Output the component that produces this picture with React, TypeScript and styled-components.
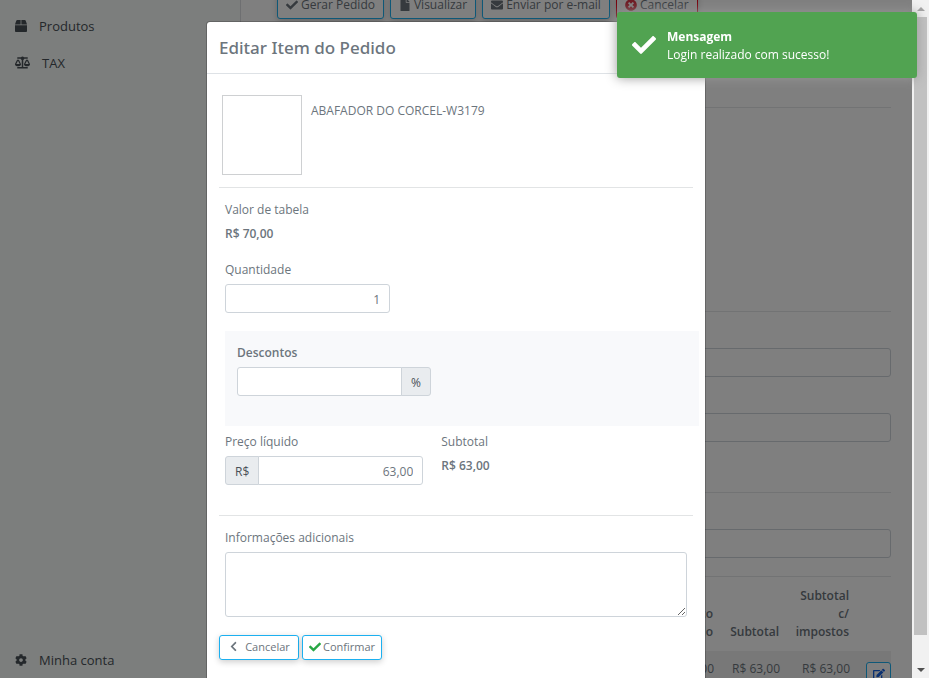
import React from "react";
import styled, { createGlobalStyle, css } from "styled-components";
import {
  FaBalanceScale,
  FaBox,
  FaCheck,
  FaChevronLeft,
  FaCog,
  FaEdit,
  FaEnvelope,
  FaFile,
  FaTimesCircle,
} from "react-icons/fa";

const GlobalStyle = createGlobalStyle`
  *, *::before, *::after { box-sizing: border-box; }
  body {
    margin: 0;
    font-family: "Open Sans", "Noto Sans", sans-serif;
    font-size: 12px;
    line-height: 18px;
    color: #6c757d;
    background: #fff;
  }
  button, input, textarea { font: inherit; color: inherit; margin: 0; }
`;

const Screen = styled.div`
  display: flex;
  height: 100vh;
  overflow: hidden;
`;

const Viewport = styled.div`
  position: relative;
  display: flex;
  flex: 1;
  min-width: 0;
  overflow: hidden;
`;

/* Sidebar */

const Sidebar = styled.nav`
  display: flex;
  flex-direction: column;
  justify-content: space-between;
  flex: 0 0 241px;
  padding: 7px 15px 0;
  background: #f8fcfa;
  border-right: 1px solid #dcdfe2;
`;

const SideGroup = styled.div`
  display: flex;
  flex-direction: column;
`;

const SideLink = styled.a`
  display: flex;
  align-items: center;
  gap: 12px;
  height: 37px;
  font-size: 13px;
  font-weight: 500;
  color: #495057;
  text-decoration: none;

  svg { font-size: 12px; }
`;

const WideSideLink = styled(SideLink)`
  svg { font-size: 15px; }
`;

/* Order page */

const Main = styled.main`
  flex: 1;
  min-width: 0;
  margin-top: -8px;
  padding: 0 21px;
`;

const Toolbar = styled.div`
  display: flex;
  gap: 6px;
  padding-left: 15px;
  margin-bottom: 88px;
`;

const buttonBase = css`
  display: inline-flex;
  align-items: center;
  justify-content: center;
  background: #fff;
  border: 1px solid #1cb0f0;
  border-radius: 3px;
  cursor: pointer;
  white-space: nowrap;
`;

const ToolButton = styled.button<{ $danger?: boolean }>`
  ${buttonBase}
  gap: 3px;
  height: 27px;
  padding: 0 8px 2px;
  font-weight: 500;
  border-color: ${(p) => (p.$danger ? "#f00018" : "#1cb0f0")};
  box-shadow: 0 2px 6px rgba(0, 0, 0, 0.2);

  svg { color: ${(p) => (p.$danger ? "#dc3545" : "inherit")}; }
`;

const Section = styled.section<{ $height: number }>`
  display: flex;
  flex-direction: column;
  gap: 36px;
  height: ${(p) => p.$height}px;
  padding-top: 36px;
  border-top: 1px solid #e4e6e8;
`;

const inputBase = css`
  height: 29px;
  padding: 2px 9px 0;
  background: #fff;
  border: 1px solid #ced4da;
  border-radius: 3px;
  outline: none;
`;

const PageInput = styled.input`
  ${inputBase}
  width: 100%;
`;

const ItemsTable = styled.table`
  width: 100%;
  border-collapse: collapse;
  border-top: 1px solid #e4e6e8;
  text-align: right;

  th {
    height: 74px;
    padding: 0 12px 10px 0;
    vertical-align: bottom;
    font-weight: 600;
  }
  td {
    height: 42px;
    padding: 9px 11px 0 0;
    vertical-align: top;
    white-space: nowrap;
  }
  tbody tr { background: #f0f0f0; }
  td:last-child { padding: 11px 0 0; }
`;

const EditButton = styled.button`
  ${buttonBase}
  width: 25px;
  height: 25px;
  padding: 0;
  color: #1460e0;
`;

/* Modal */

const Backdrop = styled.div`
  position: absolute;
  inset: 0;
  display: flex;
  justify-content: center;
  align-items: flex-start;
  padding-top: 21px;
  background: rgba(0, 0, 0, 0.5);
  overflow: hidden;
`;

const Modal = styled.div`
  flex: 0 1 500px;
  min-height: 700px;
  background: #fff;
  background-clip: padding-box;
  border: 1px solid rgba(0, 0, 0, 0.2);
  border-radius: 4px;
`;

const ModalHeader = styled.header`
  padding: 13px 12px;
  border-bottom: 1px solid #dee2e6;
`;

const ModalTitle = styled.h1`
  margin: 0;
  font-family: "Noto Sans", "Open Sans", sans-serif;
  font-size: 17px;
  line-height: 25px;
  font-weight: 500;
`;

const ModalBody = styled.form`
  padding: 21px 12px;
`;

const Product = styled.div`
  display: flex;
  gap: 9px;
  padding: 0 3px 12px;
`;

const Thumb = styled.div`
  width: 80px;
  height: 80px;
  border: 1px solid #ced0d2;
`;

const ProductName = styled.div`
  padding-top: 7px;
`;

const Rule = styled.hr`
  height: 1px;
  margin: 0;
  border: 0;
  background: #e2e4e5;
`;

const Fields = styled.div`
  display: flex;
  flex-direction: column;
  gap: 18px;
  padding: 13px 6px 0;
`;

const Field = styled.div<{ $gap?: number }>`
  display: flex;
  flex-direction: column;
  align-items: flex-start;
  gap: ${(p) => p.$gap ?? 5}px;
`;

const Strong = styled.strong`
  font-weight: 600;
`;

const TextInput = styled.input`
  ${inputBase}
  width: 165px;
  text-align: right;
`;

const DiscountPanel = styled.div`
  margin-right: -12px;
  padding: 13px 12px 30px;
  background: #f8f9fb;

  label { font-weight: 600; }
`;

const InputGroup = styled.div`
  display: flex;

  > :not(:first-child) {
    margin-left: -1px;
    border-top-left-radius: 0;
    border-bottom-left-radius: 0;
  }
  > :not(:last-child) {
    border-top-right-radius: 0;
    border-bottom-right-radius: 0;
  }
`;

const Addon = styled.span`
  ${inputBase}
  line-height: 26px;
  color: #495057;
  background: #e9ecef;
`;

const PriceRow = styled.div`
  display: flex;
  gap: 18px;
  padding: 7px 6px 30px;
`;

const Notes = styled.textarea`
  ${inputBase}
  display: block;
  width: 100%;
  height: 65px;
  resize: both;
`;

const Actions = styled.div`
  display: flex;
  gap: 3px;
  padding-top: 18px;
`;

const ActionButton = styled.button<{ $gap: number }>`
  ${buttonBase}
  gap: ${(p) => p.$gap}px;
  width: 80px;
  height: 25px;
  padding: 0 0 2px;
  font-size: 11px;
  box-shadow: 0 2px 6px rgba(0, 0, 0, 0.2);
`;

const GreenCheck = styled(FaCheck)`
  font-size: 12px;
  color: #28a745;
`;

/* Toast */

const Toast = styled.div`
  position: fixed;
  top: 12px;
  right: 12px;
  display: flex;
  align-items: center;
  gap: 11px;
  width: 300px;
  height: 66px;
  padding: 0 15px;
  color: #fff;
  background: #51a351;
  border-radius: 3px;
  box-shadow: 0 0 12px #999;

  svg { font-size: 24px; }
`;

const ToastText = styled.div`
  display: flex;
  flex-direction: column;
  padding-top: 2px;

  strong { font-weight: 700; }
`;

/* Scrollbar */

const Scrollbar = styled.div`
  display: flex;
  flex-direction: column;
  flex: 0 0 17px;
  padding: 0 2px;
  background: #f1f1f1;
`;

const ScrollArrow = styled.div<{ $down?: boolean }>`
  display: flex;
  align-items: center;
  justify-content: center;
  height: 17px;

  &::before {
    content: "";
    border: 4px solid transparent;
    ${(p) =>
      p.$down
        ? "border-top-color: #505050; border-bottom-width: 0;"
        : "border-bottom-color: #a3a3a3; border-top-width: 0;"}
  }
`;

const ScrollThumb = styled.div`
  flex: 1;
  margin-bottom: 26px;
  background: #c1c1c1;
`;

export default function App() {
  return (
    <>
      <GlobalStyle />
      <Screen>
        <Viewport>
          <Sidebar>
            <SideGroup>
              <SideLink href="#produtos"><FaBox />Produtos</SideLink>
              <WideSideLink href="#tax"><FaBalanceScale />TAX</WideSideLink>
            </SideGroup>
            <SideLink href="#conta"><FaCog />Minha conta</SideLink>
          </Sidebar>

          <Main>
            <Toolbar>
              <ToolButton type="button"><FaCheck />Gerar Pedido</ToolButton>
              <ToolButton type="button"><FaFile />Visualizar</ToolButton>
              <ToolButton type="button"><FaEnvelope />Enviar por e-mail</ToolButton>
              <ToolButton type="button" $danger><FaTimesCircle />Cancelar</ToolButton>
            </Toolbar>
            <Section $height={204} />
            <Section $height={181}>
              <PageInput aria-label="Frete" />
              <PageInput aria-label="Transportadora" />
            </Section>
            <Section $height={84}>
              <PageInput aria-label="Observações" />
            </Section>
            <ItemsTable>
              <colgroup>
                <col />
                <col width="66" />
                <col width="70" />
                <col width="30" />
              </colgroup>
              <thead>
                <tr>
                  <th>Preço<br />líquido</th>
                  <th>Subtotal</th>
                  <th>Subtotal<br />c/<br />impostos</th>
                  <th />
                </tr>
              </thead>
              <tbody>
                <tr>
                  <td>R$ 63,00</td>
                  <td>R$ 63,00</td>
                  <td>R$ 63,00</td>
                  <td><EditButton type="button" aria-label="Editar"><FaEdit /></EditButton></td>
                </tr>
              </tbody>
            </ItemsTable>
          </Main>

          <Backdrop>
            <Modal role="dialog" aria-labelledby="modal-title">
              <ModalHeader>
                <ModalTitle id="modal-title">Editar Item do Pedido</ModalTitle>
              </ModalHeader>
              <ModalBody>
                <Product>
                  <Thumb />
                  <ProductName>ABAFADOR DO CORCEL-W3179</ProductName>
                </Product>
                <Rule />
                <Fields>
                  <Field $gap={6}>
                    <span>Valor de tabela</span>
                    <Strong>R$ 70,00</Strong>
                  </Field>
                  <Field>
                    <label htmlFor="quantidade">Quantidade</label>
                    <TextInput id="quantidade" defaultValue="1" />
                  </Field>
                  <DiscountPanel>
                    <Field>
                      <label htmlFor="descontos">Descontos</label>
                      <InputGroup>
                        <TextInput id="descontos" />
                        <Addon>%</Addon>
                      </InputGroup>
                    </Field>
                  </DiscountPanel>
                </Fields>
                <PriceRow>
                  <Field>
                    <label htmlFor="preco">Preço líquido</label>
                    <InputGroup>
                      <Addon>R$</Addon>
                      <TextInput id="preco" defaultValue="63,00" />
                    </InputGroup>
                  </Field>
                  <Field $gap={6}>
                    <span>Subtotal</span>
                    <Strong>R$ 63,00</Strong>
                  </Field>
                </PriceRow>
                <Rule />
                <Fields>
                  <Field>
                    <label htmlFor="info">Informações adicionais</label>
                    <Notes id="info" />
                  </Field>
                </Fields>
                <Actions>
                  <ActionButton type="button" $gap={6}><FaChevronLeft />Cancelar</ActionButton>
                  <ActionButton type="submit" $gap={2}><GreenCheck />Confirmar</ActionButton>
                </Actions>
              </ModalBody>
            </Modal>
          </Backdrop>
        </Viewport>

        <Scrollbar aria-hidden="true">
          <ScrollArrow />
          <ScrollThumb />
          <ScrollArrow $down />
        </Scrollbar>
      </Screen>

      <Toast role="status">
        <FaCheck />
        <ToastText>
          <strong>Mensagem</strong>
          <span>Login realizado com sucesso!</span>
        </ToastText>
      </Toast>
    </>
  );
}
